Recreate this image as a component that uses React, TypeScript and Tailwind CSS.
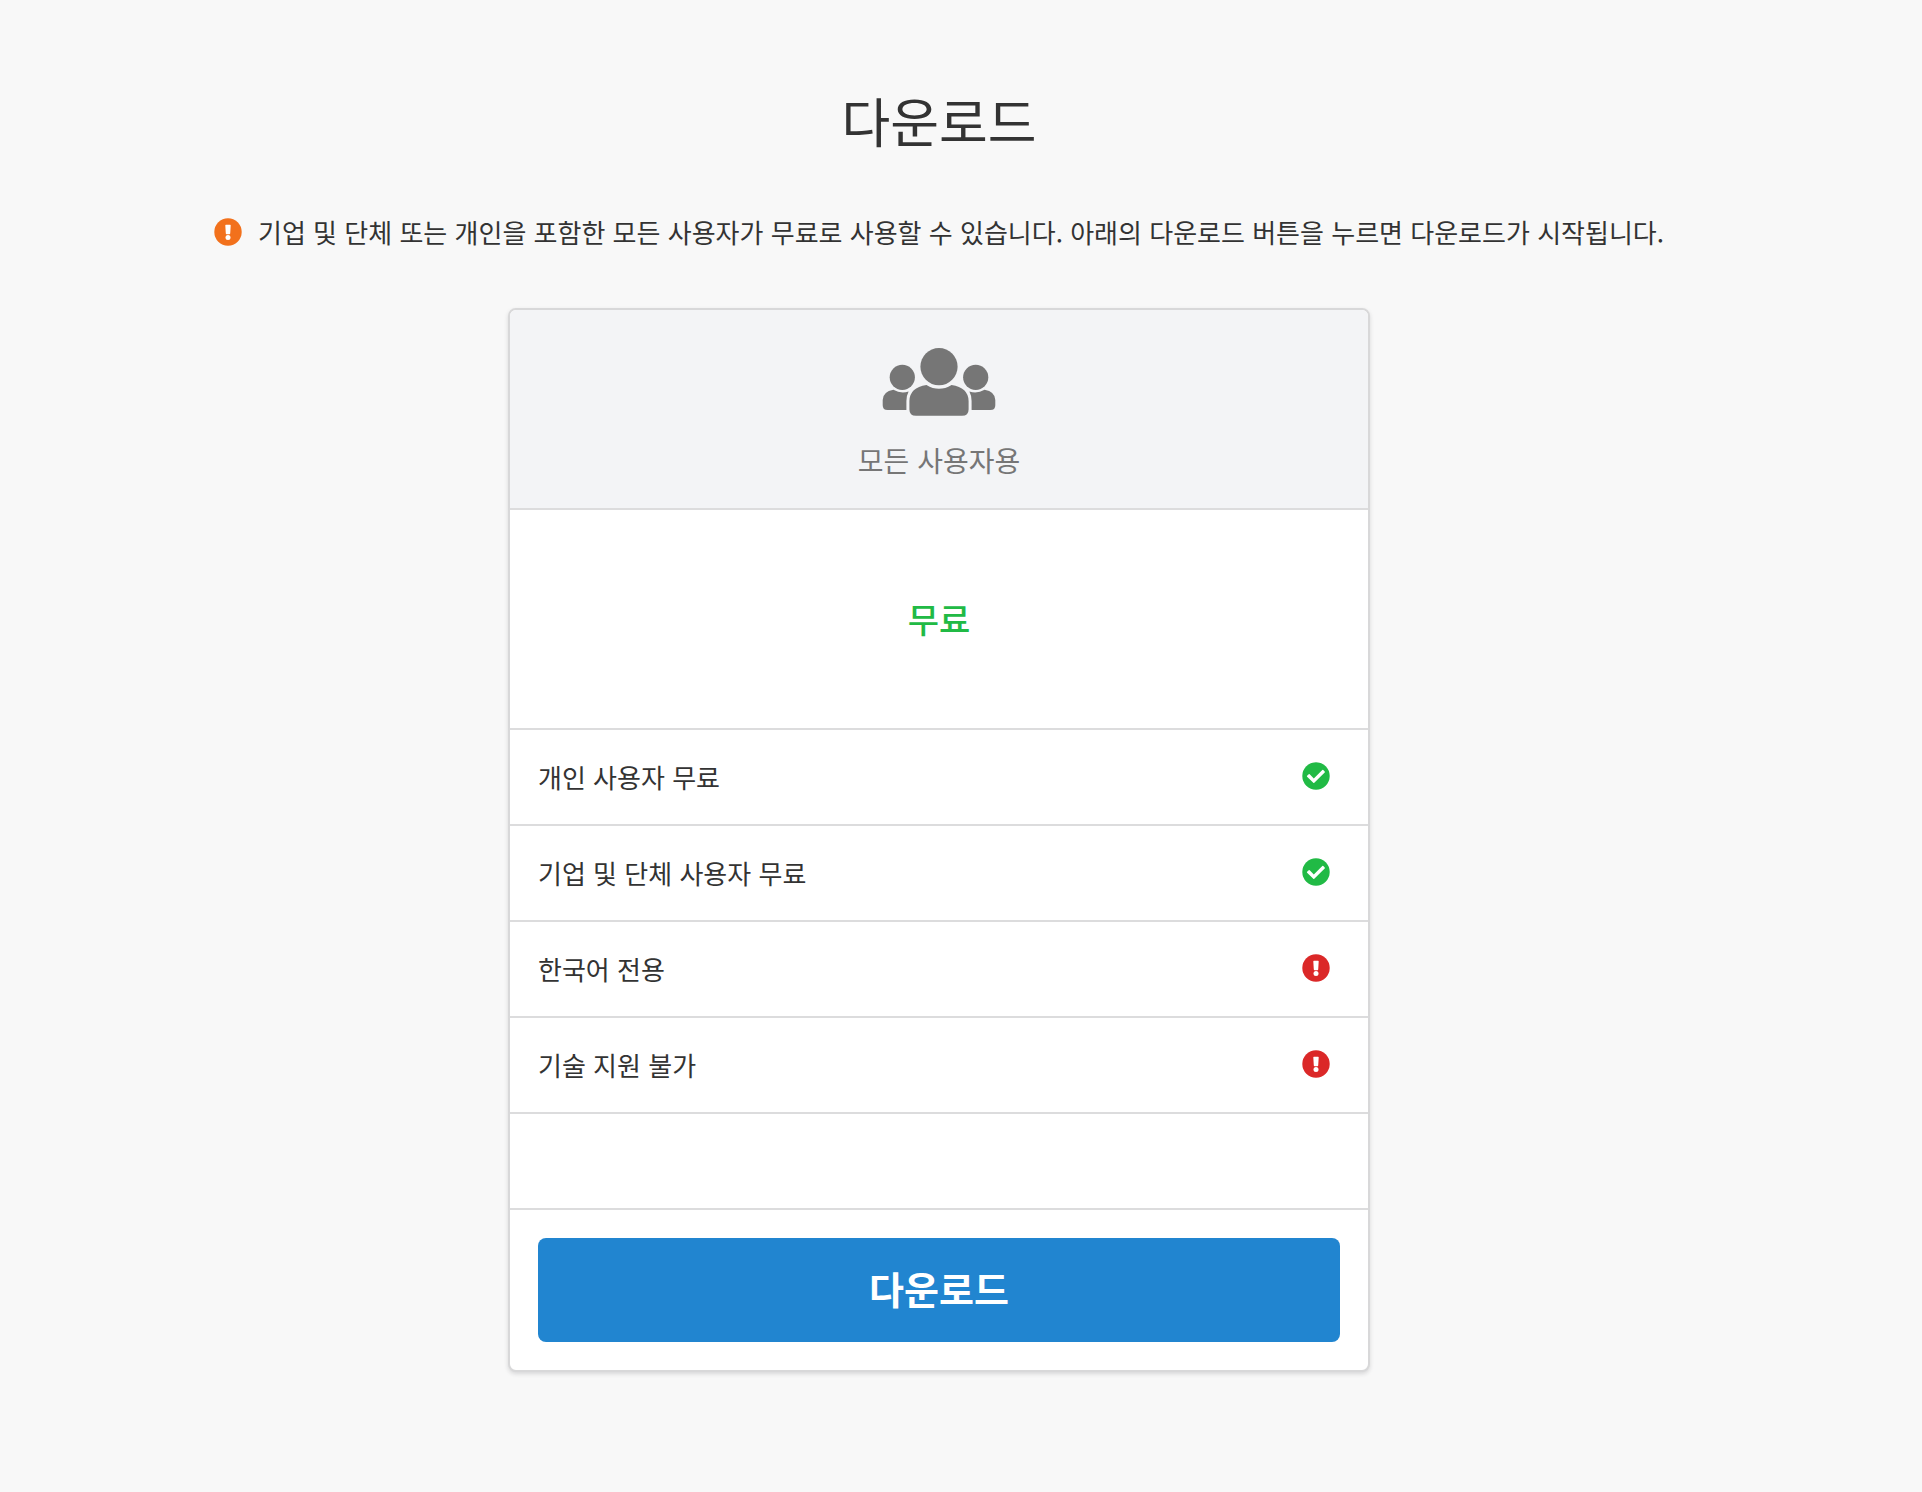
import { type ReactNode } from 'react';

type Status = 'ok' | 'warning';

interface Feature {
  label: string;
  status: Status;
}

const features: Feature[] = [
  { label: '개인 사용자 무료', status: 'ok' },
  { label: '기업 및 단체 사용자 무료', status: 'ok' },
  { label: '한국어 전용', status: 'warning' },
  { label: '기술 지원 불가', status: 'warning' },
];

const CheckIcon = () => (
  <svg viewBox="0 0 28 28" className="size-7 shrink-0 text-[#21ba45]" aria-hidden="true">
    <circle cx="14" cy="14" r="13.7" fill="currentColor" />
    <path
      d="M5.1 14.8q-.5-.5 0-1l1.6-1.5q.5-.5 1 0l4.1 4.2L20.3 8q.5-.4 1 0l1.4 1.5q.5.5 0 1L12.3 20.7q-.5.5-1 0z"
      fill="#fff"
    />
  </svg>
);

const AlertIcon = ({ className }: { className: string }) => (
  <svg viewBox="0 0 28 28" className={`size-7 shrink-0 ${className}`} aria-hidden="true">
    <circle cx="14" cy="14" r="13.7" fill="currentColor" />
    <path d="M11.9 6.7h4.2q.6 0 .6.6l-.5 8.2q-.1.7-.7.7h-3q-.6 0-.7-.7l-.5-8.2q0-.6.6-.6z" fill="#fff" />
    <circle cx="14" cy="19.5" r="2.5" fill="#fff" />
  </svg>
);

const UsersIcon = () => (
  <svg viewBox="0 0 114 68" className="h-17 w-28.5" fill="#767676" aria-hidden="true">
    <circle cx="57" cy="18.7" r="18.6" />
    <circle cx="20.3" cy="29.3" r="12.6" />
    <circle cx="93.7" cy="29.3" r="12.6" />
    <path d="M44.5 36.9Q57 44.6 69.5 36.9Q86.4 39.4 86.6 53V61.5Q86.6 67.8 80 67.8H34Q27.4 67.8 27.4 61.5V53Q27.6 39.4 44.5 36.9z" />
    <path d="M11.4 41.8Q18.8 46 26.6 43.5Q24.4 47.6 24.4 53V62.1H5.6Q.7 62.1 .7 57.2V52Q.9 43.7 11.4 41.8z" />
    <path d="M102.6 41.8Q95.2 46 87.4 43.5Q89.6 47.6 89.6 53V62.1H108.4Q113.3 62.1 113.3 57.2V52Q113.1 43.7 102.6 41.8z" />
  </svg>
);

const Row = ({ children }: { children?: ReactNode }) => (
  <li className="flex h-24 items-center justify-between border-b-2 border-[#dcdcdd] pr-9.5 pb-0.5 pl-7">
    {children}
  </li>
);

export default function App() {
  return (
    <main
      lang="ko"
      className="min-h-screen bg-[#f8f8f8] pt-20 pr-11 pb-30 font-['Noto_Sans_CJK_KR',sans-serif] text-[#333]"
    >
      <h1 className="text-center text-[53px] leading-20">다운로드</h1>

      <p className="mt-13 flex items-center justify-center gap-4 text-[26px] leading-10">
        <AlertIcon className="text-[#f2711c]" />
        기업 및 단체 또는 개인을 포함한 모든 사용자가 무료로 사용할 수 있습니다. 아래의 다운로드 버튼을 누르면 다운로드가 시작됩니다.
      </p>

      <section className="mx-auto mt-14 w-full max-w-[862px] rounded-lg border-2 border-[#d8d8d9] bg-white shadow-[0_2px_4px_rgba(34,36,38,0.15)]">
        <header className="flex flex-col items-center rounded-t-md border-b-2 border-[#dcdcdd] bg-[#f3f4f6] pt-9.5 pb-6.5 text-[#767676]">
          <UsersIcon />
          <h2 className="mt-5.5 text-[28px] leading-11">모든 사용자용</h2>
        </header>

        <p className="flex h-55 items-center justify-center border-b-2 border-[#dcdcdd] pb-0.5 text-[34px] font-medium text-[#21ba45]">
          무료
        </p>

        <ul className="text-[26px]">
          {features.map(({ label, status }) => (
            <Row key={label}>
              <span>{label}</span>
              {status === 'ok' ? <CheckIcon /> : <AlertIcon className="text-[#db2828]" />}
            </Row>
          ))}
          <Row />
        </ul>

        <div className="p-7">
          <button
            type="button"
            className="h-26 w-full rounded-lg bg-[#2185d0] pb-1.5 text-[38px] font-bold text-white hover:bg-[#1678c2]"
          >
            다운로드
          </button>
        </div>
      </section>
    </main>
  );
}
